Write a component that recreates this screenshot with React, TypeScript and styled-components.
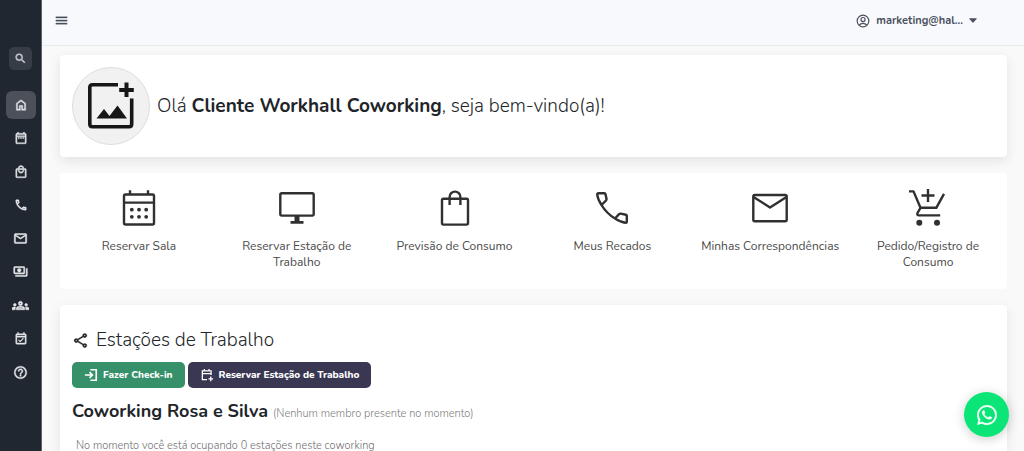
import React from "react";
import styled, { createGlobalStyle } from "styled-components";
import {
  MdSearch,
  MdMenu,
  MdOutlineDateRange,
  MdOutlineLocalMall,
  MdOutlineCall,
  MdOutlineMail,
  MdOutlinePayments,
  MdOutlineGroups,
  MdOutlineEventAvailable,
  MdHelpOutline,
  MdOutlineShare,
} from "react-icons/md";
import { RiWhatsappLine } from "react-icons/ri";

const GlobalStyle = createGlobalStyle`
  * { box-sizing: border-box; }
  body {
    margin: 0;
    background: #f9f9f9;
    color: #212529;
    font-family: Nunito, Lato, "Open Sans", sans-serif;
    font-size: 12px;
    overflow: hidden;
  }
  h1, h2, h3, p { margin: 0; }
  button { font: inherit; border: 0; cursor: pointer; }
  a { color: inherit; text-decoration: none; }
  svg { display: block; flex: none; }
  svg path[fill="none"] { stroke: none; }
`;

const Shell = styled.div`
  display: flex;
  height: 100vh;
`;

const Sidebar = styled.aside`
  flex: none;
  display: flex;
  flex-direction: column;
  align-items: center;
  gap: 21px;
  width: 42px;
  padding-top: 47px;
  background: #202731;
  border-right: 1px solid #5d626a;
`;

const SearchButton = styled.button`
  display: grid;
  place-items: center;
  width: 23px;
  height: 23px;
  padding: 0;
  border-radius: 5px;
  background: #373d46;
  color: #c3c6ca;

  svg { stroke: currentColor; stroke-width: 1px; }
`;

const Nav = styled.nav`
  display: flex;
  flex-direction: column;
  justify-content: space-between;
  height: 295px;
`;

const NavLink = styled.a<{ $active?: boolean }>`
  display: grid;
  place-items: center;
  width: 30px;
  height: 28px;
  border-radius: 6px;
  color: #e4e5e9;
  background: ${(p) => (p.$active ? "#4b5059" : "transparent")};

  svg { stroke: currentColor; stroke-width: 0.7px; }
`;

const Main = styled.div`
  flex: 1;
  display: flex;
  flex-direction: column;
  min-width: 0;
`;

const Header = styled.header`
  flex: none;
  display: flex;
  align-items: center;
  justify-content: space-between;
  height: 46px;
  padding: 0 47px 4px 12px;
  background: #f7f9fc;
  border-bottom: 1px solid #e8ebee;
  color: #4b4f5c;
`;

const MenuButton = styled.button`
  padding: 0;
  background: none;
  color: inherit;

  svg { stroke: currentColor; stroke-width: 0.5px; }
`;

const UserButton = styled.button`
  display: flex;
  align-items: center;
  gap: 6px;
  padding: 0;
  background: none;
  color: inherit;
  font-size: 11px;
  font-weight: 700;
`;

const Content = styled.main`
  flex: 1;
  display: flex;
  flex-direction: column;
  gap: 16px;
  min-height: 0;
  padding: 9px 17px 0 18px;
`;

const Card = styled.section<{ $flat?: boolean }>`
  flex: none;
  border-radius: 4px;
  background: #fff;
  box-shadow: ${(p) => (p.$flat ? "none" : "0 4px 12px rgba(0, 0, 0, 0.09)")};
`;

const Welcome = styled(Card)`
  display: flex;
  align-items: center;
  gap: 7px;
  padding: 12px;
`;

const Avatar = styled.div`
  display: grid;
  place-items: center;
  width: 78px;
  height: 78px;
  border: 1px solid #dedede;
  border-radius: 50%;
  background: #f1f1f1;
`;

const Greeting = styled.h1`
  font-size: 19px;
  font-weight: 300;
  line-height: 24px;

  strong { font-weight: 700; }
`;

const Shortcuts = styled(Card)`
  display: grid;
  grid-template-columns: repeat(6, 1fr);
  padding: 15px 0 19px;
`;

const Shortcut = styled.a`
  display: flex;
  flex-direction: column;
  align-items: center;
  gap: 10px;
  padding: 0 8px;
  color: #4a4a4a;
  font-size: 12px;
  line-height: 16px;
  text-align: center;

  svg { color: #303030; }
  span { max-width: 144px; }
`;

const Stations = styled(Card)`
  flex: 1;
  min-height: 0;
  padding: 24px 12px 0;
  border-radius: 4px 4px 0 0;
`;

const SectionTitle = styled.h2`
  display: flex;
  align-items: center;
  gap: 7px;
  font-size: 19px;
  font-weight: 300;
  line-height: 22px;

  svg { stroke: currentColor; stroke-width: 0.5px; }
`;

const Actions = styled.div`
  display: flex;
  gap: 3px;
  margin-top: 11px;
`;

const ActionButton = styled.button<{ $color: string }>`
  display: flex;
  align-items: center;
  gap: 5px;
  height: 26px;
  padding: 0 12px;
  border-radius: 5px;
  background: ${(p) => p.$color};
  color: #fff;
  font-size: 10px;
  font-weight: 800;
`;

const PlaceName = styled.h3`
  margin-top: 11px;
  font-size: 18px;
  font-weight: 700;
  line-height: 24px;

  small {
    color: #808080;
    font-size: 11px;
    font-weight: 300;
  }
`;

const Note = styled.p`
  margin-top: 12px;
  padding-left: 4px;
  color: #707070;
  font-size: 11px;
  font-weight: 300;
  line-height: 16px;
`;

const WhatsApp = styled.a`
  position: fixed;
  right: 15px;
  bottom: 14px;
  display: grid;
  place-items: center;
  width: 45px;
  height: 45px;
  border-radius: 50%;
  background: #0be577;
  color: #e8fff2;
  box-shadow: 0 2px 12px rgba(0, 0, 0, 0.2);
`;

const HomeIcon = () => (
  <svg width="14" height="14" viewBox="0 0 24 24" fill="currentColor">
    <path d="M6 19h3v-6h6v6h3v-9l-6-4.5L6 10v9Zm-2 2V9l8-6 8 6v12h-7v-6h-2v6H4Z" />
  </svg>
);

const AccountIcon = () => (
  <svg width="14" height="14" viewBox="0 0 24 24" fill="none" stroke="currentColor" strokeWidth="2">
    <circle cx="12" cy="12" r="10" />
    <circle cx="12" cy="9.5" r="3.5" />
    <path d="M5.5 19c1.700-2 4-3 6.500-3s4.800 1 6.500 3" />
  </svg>
);

const CaretIcon = () => (
  <svg width="8" height="5" viewBox="0 0 14 8" fill="currentColor">
    <path d="M1 0h12q1 .5.300 1.500L7.700 7.500q-.7.700-1.400 0L.7 1.500Q0 .5 1 0z" />
  </svg>
);

const AddImageIcon = () => (
  <svg width="48" height="48" viewBox="0 0 48 48" fill="none" stroke="#171717">
    <path strokeWidth="3.600" d="M31 2.800H5.500Q2.800 2.800 2.800 5.500V42Q2.800 44.700 5.500 44.700H42Q44.700 44.700 44.700 42V16.500" />
    <path strokeWidth="4" d="M39.500.5v14.500M32.200 8h14.600" />
    <path fill="#171717" stroke="none" d="M9.500 36.500l7.500-9.500 5.500 7 8-10.500 9.500 13z" />
  </svg>
);

const CalendarAddIcon = () => (
  <svg width="14" height="14" viewBox="0 0 24 24" fill="none" stroke="currentColor" strokeWidth="2.200">
    <path d="M12 20H4V5h15v7M4 9.500h15M7.500 1.500V5M15.500 1.500V5" />
    <path d="M18.500 14.500v8M14.500 18.500h8" />
  </svg>
);

const LoginIcon = () => (
  <svg width="14" height="14" viewBox="0 0 24 24" fill="none" stroke="currentColor" strokeWidth="2.800">
    <path d="M11 3h10v18H11M1.500 12H14M9.500 7l5 5-5 5" />
  </svg>
);

const LineIcon = ({ children }: { children: React.ReactNode }) => (
  <svg
    width="40"
    height="40"
    viewBox="0 0 40 40"
    fill="none"
    stroke="currentColor"
    strokeWidth="2.400"
    strokeLinejoin="round"
  >
    {children}
  </svg>
);

const navItems = [
  { label: "Início", icon: <HomeIcon />, active: true },
  { label: "Salas", icon: <MdOutlineDateRange size={14} /> },
  { label: "Consumo", icon: <MdOutlineLocalMall size={14} /> },
  { label: "Recados", icon: <MdOutlineCall size={14} /> },
  { label: "Correspondências", icon: <MdOutlineMail size={15} /> },
  { label: "Financeiro", icon: <MdOutlinePayments size={15} /> },
  { label: "Membros", icon: <MdOutlineGroups size={17} /> },
  { label: "Eventos", icon: <MdOutlineEventAvailable size={14} /> },
  { label: "Ajuda", icon: <MdHelpOutline size={15} /> },
];

const shortcuts = [
  {
    label: "Reservar Sala",
    icon: (
      <LineIcon>
        <rect x="5" y="6.500" width="30" height="30" rx="1.500" />
        <path d="M5 14.600h30M11 2.300v4M29 2.300v4" />
        <g fill="currentColor" stroke="none">
          <circle cx="12.800" cy="21.700" r="1.900" />
          <circle cx="20" cy="21.700" r="1.900" />
          <circle cx="27.200" cy="21.700" r="1.900" />
          <circle cx="12.800" cy="28.800" r="1.900" />
          <circle cx="20" cy="28.800" r="1.900" />
          <circle cx="27.200" cy="28.800" r="1.900" />
        </g>
      </LineIcon>
    ),
  },
  {
    label: "Reservar Estação de Trabalho",
    icon: (
      <LineIcon>
        <rect x="3.300" y="5.200" width="33.400" height="22.400" rx="1.500" />
        <path fill="currentColor" stroke="none" d="M17.500 28h5v5h4v2.700h-13V33h4z" />
      </LineIcon>
    ),
  },
  {
    label: "Previsão de Consumo",
    icon: (
      <LineIcon>
        <rect x="7" y="10.800" width="26" height="25.800" rx="1.500" />
        <path d="M14.600 17V9a5.400 5.400 0 0 1 10.800 0v8" />
      </LineIcon>
    ),
  },
  {
    label: "Meus Recados",
    icon: (
      <LineIcon>
        <path d="M9.500 17L14 12.500Q14.700 11.800 14.500 10.800L13.500 6.200Q13.300 5.200 12.300 5.200H6.500Q5.200 5.200 5.200 6.500C5.600 10.500 7.300 13.700 9.500 17C12.800 22.500 17.500 27.200 23 30.500C26.300 32.700 29.500 34.400 33.500 34.800Q34.800 34.800 34.800 33.500V28Q34.800 27 33.800 26.800L28.800 25.700Q27.800 25.500 27.100 26.200L23 30.500" />
      </LineIcon>
    ),
  },
  {
    label: "Minhas Correspondências",
    icon: (
      <LineIcon>
        <rect x="3.300" y="7" width="33.400" height="26.200" rx="1.500" />
        <path d="M3.500 9L20 19.500 36.500 9" />
      </LineIcon>
    ),
  },
  {
    label: "Pedido/Registro de Consumo",
    icon: (
      <LineIcon>
        <path d="M1 3.400h4.500L12.500 19.800H28.300L36 5.800M12.500 19.800L9.500 25Q8.700 27.400 11 27.400H32.200M20 1v13M13.500 7.500h13" />
        <circle cx="11.300" cy="34.700" r="3" fill="currentColor" stroke="none" />
        <circle cx="29" cy="34.700" r="3" fill="currentColor" stroke="none" />
      </LineIcon>
    ),
  },
];

export default function App() {
  return (
    <>
      <GlobalStyle />
      <Shell>
        <Sidebar>
          <SearchButton aria-label="Buscar">
            <MdSearch size={13} />
          </SearchButton>
          <Nav>
            {navItems.map((item) => (
              <NavLink key={item.label} href="#" aria-label={item.label} $active={item.active}>
                {item.icon}
              </NavLink>
            ))}
          </Nav>
        </Sidebar>
        <Main>
          <Header>
            <MenuButton aria-label="Menu">
              <MdMenu size={15} />
            </MenuButton>
            <UserButton>
              <AccountIcon />
              <span>marketing@hal...</span>
              <CaretIcon />
            </UserButton>
          </Header>
          <Content>
            <Welcome>
              <Avatar>
                <AddImageIcon />
              </Avatar>
              <Greeting>
                Olá <strong>Cliente Workhall Coworking</strong>, seja bem-vindo(a)!
              </Greeting>
            </Welcome>
            <Shortcuts $flat>
              {shortcuts.map((s) => (
                <Shortcut key={s.label} href="#">
                  {s.icon}
                  <span>{s.label}</span>
                </Shortcut>
              ))}
            </Shortcuts>
            <Stations>
              <SectionTitle>
                <MdOutlineShare size={17} />
                Estações de Trabalho
              </SectionTitle>
              <Actions>
                <ActionButton $color="#36916a">
                  <LoginIcon />
                  Fazer Check-in
                </ActionButton>
                <ActionButton $color="#3a3753">
                  <CalendarAddIcon />
                  Reservar Estação de Trabalho
                </ActionButton>
              </Actions>
              <PlaceName>
                Coworking Rosa e Silva <small>(Nenhum membro presente no momento)</small>
              </PlaceName>
              <Note>No momento você está ocupando 0 estações neste coworking</Note>
            </Stations>
          </Content>
        </Main>
      </Shell>
      <WhatsApp href="#" aria-label="WhatsApp">
        <RiWhatsappLine size={24} />
      </WhatsApp>
    </>
  );
}
